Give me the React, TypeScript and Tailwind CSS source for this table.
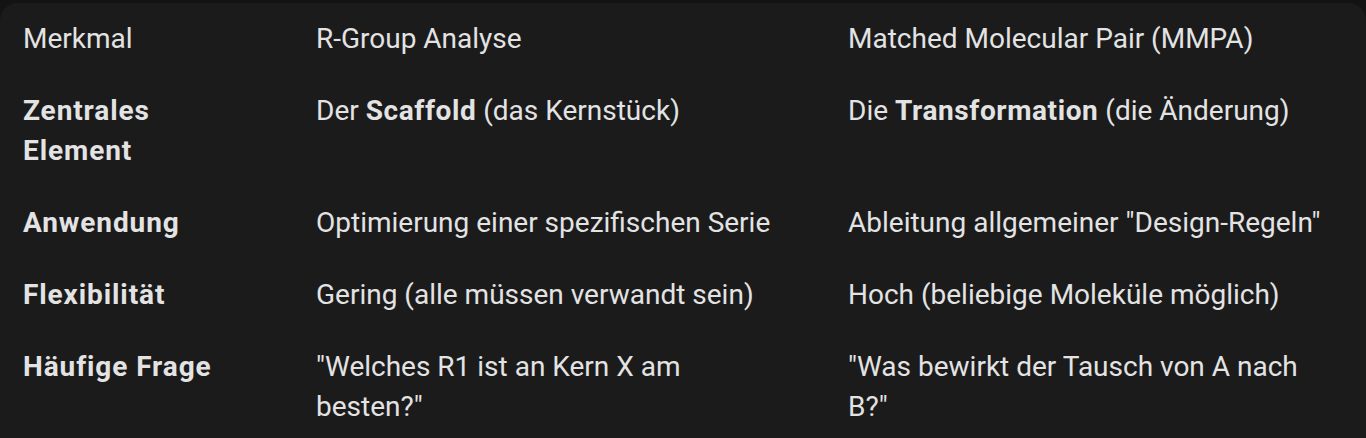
const rows: { label: string; a: React.ReactNode; b: React.ReactNode }[] = [
  {
    label: "Zentrales Element",
    a: (
      <>
        Der <b className="font-bold tracking-[0.6px]">Scaffold</b> (das Kernstück)
      </>
    ),
    b: (
      <>
        Die <b className="font-bold tracking-[0.6px]">Transformation</b> (die Änderung)
      </>
    ),
  },
  {
    label: "Anwendung",
    a: "Optimierung einer spezifischen Serie",
    b: 'Ableitung allgemeiner "Design-Regeln"',
  },
  {
    label: "Flexibilität",
    a: "Gering (alle müssen verwandt sein)",
    b: "Hoch (beliebige Moleküle möglich)",
  },
  {
    label: "Häufige Frage",
    a: '"Welches R1 ist an Kern X am besten?"',
    b: '"Was bewirkt der Tausch von A nach B?"',
  },
];

export default function App() {
  return (
    <div className="min-h-screen bg-[#131313] pt-[3px] font-['Roboto',sans-serif] text-[28px] leading-[40px] text-[#e3e3e3]">
      <div className="rounded-t-[18px] bg-[#1b1b1b] overflow-hidden">
        <table className="w-full table-fixed border-collapse text-left">
          <colgroup>
            <col className="w-[293px]" />
            <col className="w-[532px]" />
            <col />
          </colgroup>
          <thead>
            <tr>
              <th className="pl-[23px] pr-[70px] py-4 font-normal align-top">Merkmal</th>
              <th className="pl-[23px] pr-[43px] py-4 font-normal align-top">R-Group Analyse</th>
              <th className="pl-[23px] pr-[33px] py-4 font-normal align-top">Matched Molecular Pair (MMPA)</th>
            </tr>
          </thead>
          <tbody>
            {rows.map((r) => (
              <tr key={r.label}>
                <td className="pl-[23px] pr-[60px] py-4 font-bold tracking-[0.9px] align-top">{r.label}</td>
                <td className="pl-[23px] pr-[43px] py-4 align-top">{r.a}</td>
                <td className="pl-[23px] pr-[33px] py-4 align-top">{r.b}</td>
              </tr>
            ))}
          </tbody>
        </table>
      </div>
    </div>
  );
}
